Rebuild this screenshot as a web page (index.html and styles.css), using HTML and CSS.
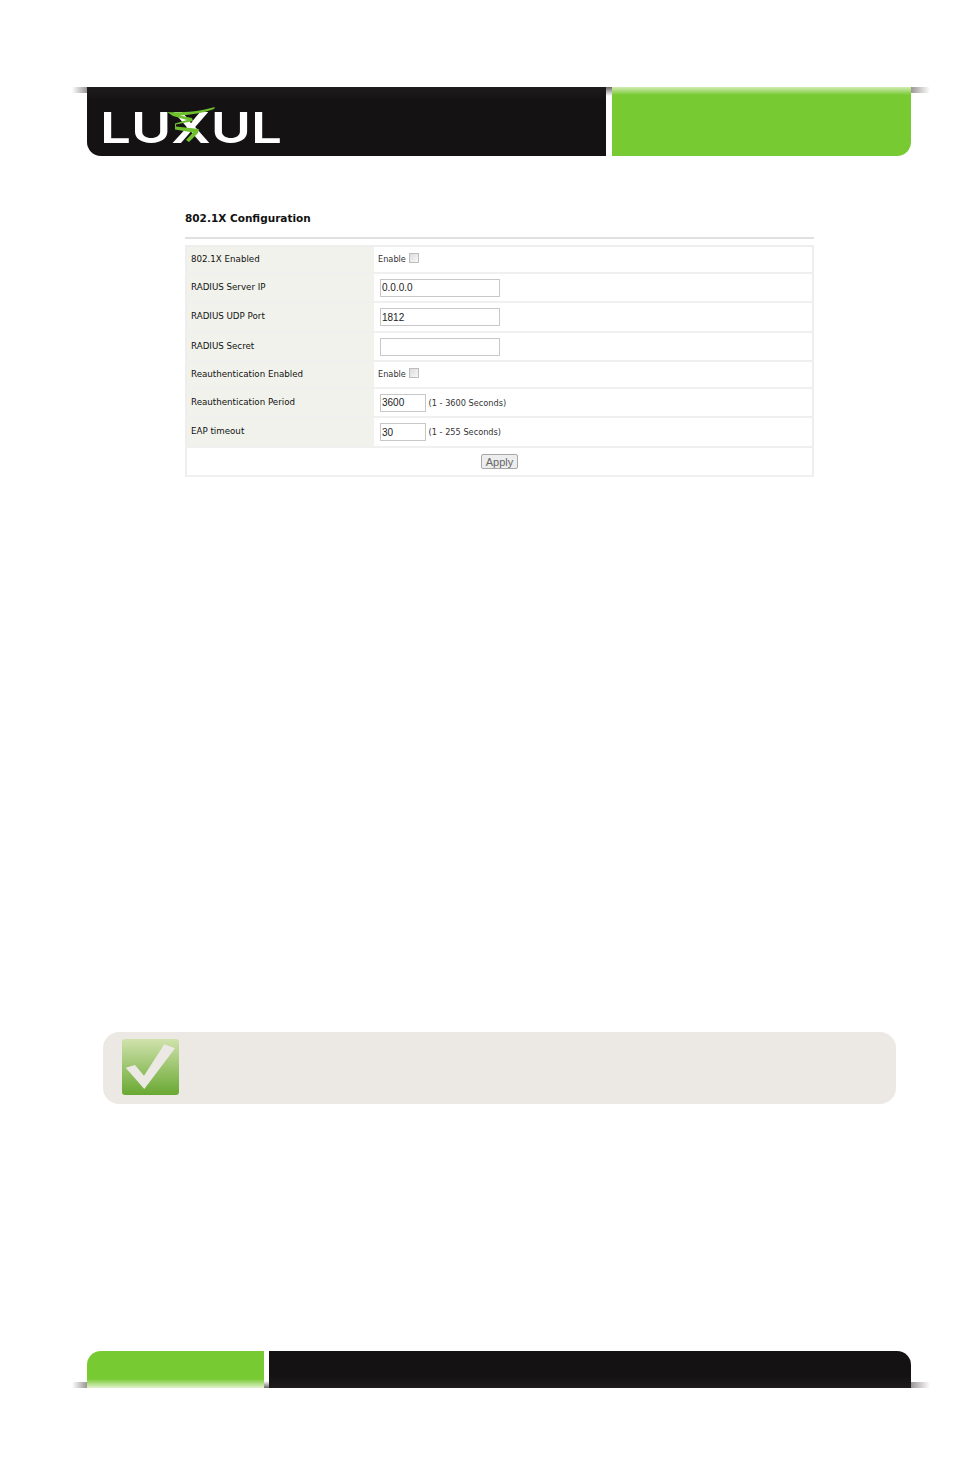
FILE: index.html
```html
<!DOCTYPE html>
<html lang="en">
<head>
    <meta charset="UTF-8">
    <title>802.1X Configuration</title>
    <link rel="stylesheet" href="styles.css">
</head>
<body>
    <header class="banner">
        <span class="wedge wedge-left"></span>
        <div class="banner-black">
            <svg class="logo" width="190" height="50" viewBox="0 0 190 50">
                <text x="-3" y="40" class="logo-text" textLength="182" lengthAdjust="spacingAndGlyphs">LUXUL</text>
                <path d="M64 9 C75 10 95 9 112 4 L111 6 C100 10 88 12 77 12.5 L89 15 L90 18 L73 21.5 L73 23.5 L96 26 L95 30 L86 39 L83 37 L90 29.5 L72 26.5 L72 20.5 L84 17 L70 13 Z" fill="#6fc02f"/>
            </svg>
        </div>
        <span class="gap"></span>
        <div class="banner-green"></div>
        <span class="wedge wedge-right"></span>
    </header>

    <main class="content">
        <h2 class="title">802.1X Configuration</h2>
        <table class="config">
            <tr class="row-a">
                <th>802.1X Enabled</th>
                <td>Enable <input type="checkbox" class="check"></td>
            </tr>
            <tr class="row-b">
                <th>RADIUS Server IP</th>
                <td><input type="text" class="field" value="0.0.0.0"></td>
            </tr>
            <tr class="row-c">
                <th>RADIUS UDP Port</th>
                <td><input type="text" class="field" value="1812"></td>
            </tr>
            <tr class="row-b">
                <th>RADIUS Secret</th>
                <td><input type="text" class="field"></td>
            </tr>
            <tr class="row-a">
                <th>Reauthentication Enabled</th>
                <td>Enable <input type="checkbox" class="check"></td>
            </tr>
            <tr class="row-b">
                <th>Reauthentication Period</th>
                <td><input type="text" class="field short" value="3600"> (1 - 3600 Seconds)</td>
            </tr>
            <tr class="row-c">
                <th>EAP timeout</th>
                <td><input type="text" class="field short" value="30"> (1 - 255 Seconds)</td>
            </tr>
            <tr class="row-b">
                <td colspan="2" class="actions"><input type="button" class="apply" value="Apply"></td>
            </tr>
        </table>
    </main>

    <div class="note">
        <svg class="note-icon" width="57" height="56" viewBox="0 0 57 56">
            <defs>
                <linearGradient id="noteGreen" x1="0" y1="0" x2="0" y2="1">
                    <stop offset="0" stop-color="#d0e2ac"/>
                    <stop offset="1" stop-color="#69a832"/>
                </linearGradient>
            </defs>
            <rect width="57" height="56" rx="3" fill="url(#noteGreen)"/>
            <polygon points="3.7,28.7 13,26 22,36.7 42.3,5.3 53,9.3 22.3,50" fill="#ece9e4"/>
        </svg>
    </div>

    <footer class="banner foot">
        <span class="wedge wedge-left"></span>
        <div class="foot-green"></div>
        <span class="gap"></span>
        <div class="foot-black"></div>
        <span class="wedge wedge-right"></span>
    </footer>
</body>
</html>
```

FILE: styles.css
```css
body {
    margin: 0;
    padding: 0;
    background-color: white;
    font-family: "DejaVu Sans", sans-serif;
    min-height: 1474px;
}
.banner {
    display: flex;
    height: 69px;
    margin: 87px 0 0 72px;
}
.wedge {
    height: 6px;
}
.wedge-left {
    width: 15px;
    background: linear-gradient(to right, rgba(90, 80, 80, 0), rgba(90, 80, 80, 0.6));
}
.wedge-right {
    width: 19px;
    background: linear-gradient(to right, rgba(90, 80, 80, 0.6), rgba(90, 80, 80, 0));
}
.banner-black {
    width: 519px;
    background: linear-gradient(to bottom, #1e1c1c, #151213 14px);
    border-radius: 0 0 0 14px;
    box-sizing: border-box;
    padding: 16px 0 0 16px;
}
.logo {
    display: block;
    overflow: visible;
}
.logo-text {
    font-family: Inter, sans-serif;
    font-size: 43px;
    font-weight: 600;
    fill: white;
}
.gap {
    width: 6px;
    background: linear-gradient(to bottom, #6b6666, white 9px);
}
.banner-green {
    width: 299px;
    background: linear-gradient(to bottom, #d3ebb4, #78ca33 8px);
    border-radius: 0 0 14px 0;
}
.content {
    width: 629px;
    margin: 54px 0 0 185px;
}
.title {
    margin: 0;
    height: 27px;
    line-height: 16px;
    font-size: 10.5px;
    font-weight: bold;
    color: #111;
    border-bottom: 2px solid #e0e0e0;
}
.config {
    width: 629px;
    margin-top: 6px;
    border-collapse: collapse;
    table-layout: fixed;
    border: 2px solid #eeeeee;
    font-size: 8.2px;
    color: #333;
}
.config tr {
    border-bottom: 2px solid #f0f0f0;
}
.row-a {
    height: 27px;
}
.row-b {
    height: 29px;
}
.row-c {
    height: 30px;
}
.config th {
    width: 183px;
    padding: 0 0 2px 4px;
    background-color: #f0f2eb;
    text-align: left;
    font-size: 8.7px;
    font-weight: normal;
    color: #111;
}
.config td {
    padding: 0 0 0 4px;
}
.check {
    appearance: none;
    width: 10px;
    height: 10px;
    margin: 0 0 3px 0;
    border: 1px solid #bdbdbd;
    background: linear-gradient(to bottom right, #dcdcdc, #f8f8f8);
    vertical-align: middle;
}
.field {
    box-sizing: border-box;
    width: 120px;
    height: 18px;
    margin-left: 2px;
    padding: 0 1px;
    border: 1px solid #c8c8c8;
    font-family: "Liberation Sans", sans-serif;
    font-size: 10px;
    color: #222;
    vertical-align: middle;
}
.short {
    width: 46px;
}
.config .actions {
    padding: 0;
    text-align: center;
}
.apply {
    width: 37px;
    height: 15px;
    padding: 0;
    border: 1px solid #a8a8a8;
    border-radius: 2px;
    background-color: #ededed;
    font-family: "Liberation Sans", sans-serif;
    font-size: 11px;
    color: #666;
}
.note {
    display: flex;
    box-sizing: border-box;
    width: 793px;
    height: 72px;
    margin: 555px 0 0 103px;
    padding: 7px 0 0 19px;
    background-color: #ece9e4;
    border-radius: 16px;
}
.note-icon {
    display: block;
}
.foot {
    height: 37px;
    margin-top: 247px;
}
.foot .wedge {
    height: 6px;
    align-self: flex-end;
}
.foot .gap {
    width: 5px;
    background: linear-gradient(to top, #6b6666, white 7px);
}
.foot-green {
    width: 177px;
    background: linear-gradient(to top, #e4f2d0, #78ca33 9px);
    border-radius: 14px 0 0 0;
}
.foot-black {
    width: 642px;
    background: linear-gradient(to top, #1e1c1c, #151213 12px);
    border-radius: 0 14px 0 0;
}
```
